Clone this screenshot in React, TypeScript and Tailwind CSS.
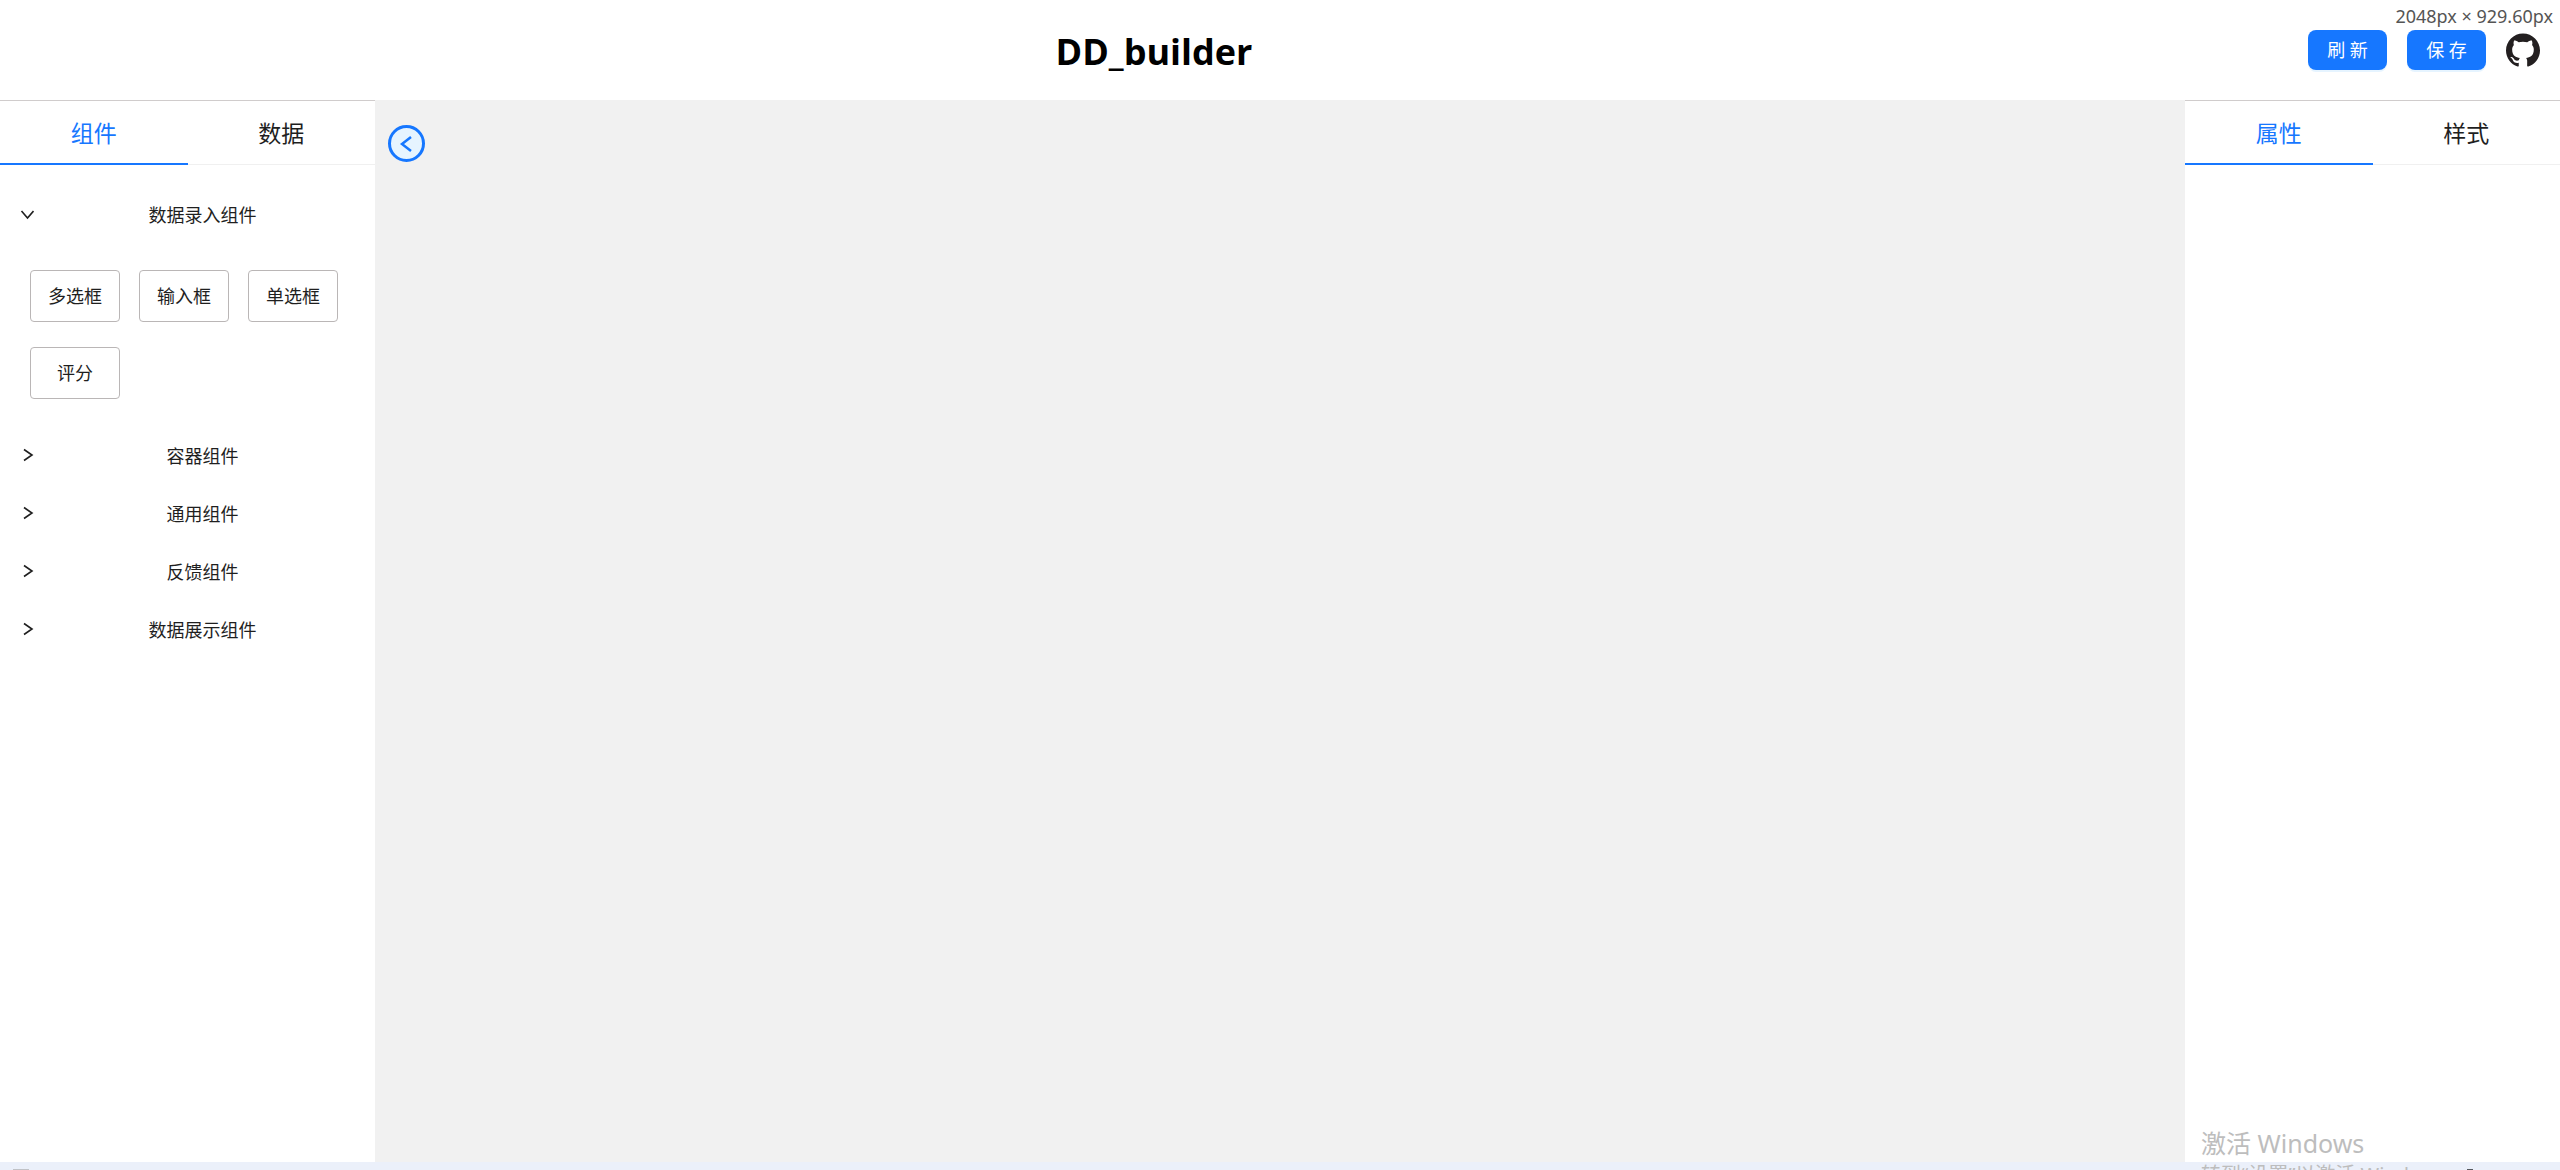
import { useState } from 'react';

const groups = ['容器组件', '通用组件', '反馈组件', '数据展示组件'];
const inputs = ['多选框', '输入框', '单选框', '评分'];

function Tabs({ items }: { items: string[] }) {
  const [active, setActive] = useState(0);
  return (
    <div role="tablist" className="flex h-[65px] border-t border-[#d0cccc]">
      {items.map((t, i) => (
        <button
          key={t}
          role="tab"
          aria-selected={i === active}
          onClick={() => setActive(i)}
          className={
            i === active
              ? 'flex-1 border-b-2 border-[#1677ff] pt-0.5 text-[23px] text-[#1677ff]'
              : 'flex-1 border-b border-[#f0f0f0] pt-0.5 text-[23px] text-[#1f1f1f]'
          }
        >
          {t}
        </button>
      ))}
    </div>
  );
}

function Chevron({ open }: { open: boolean }) {
  return (
    <svg viewBox="0 0 14 14" className="h-[14px] w-[14px] shrink-0" fill="none" stroke="#1f1f1f" strokeWidth="1.6">
      <path d={open ? 'M1.5 4 7.5 11 13.5 4' : 'M4 1.5 12 7 4 12.5'} />
    </svg>
  );
}

function GroupHeader({ label, open, onClick }: { label: string; open: boolean; onClick?: () => void }) {
  return (
    <button onClick={onClick} aria-expanded={open} className="flex h-[58px] w-full items-center px-5 text-[18px]">
      <Chevron open={open} />
      <span className="flex-1 pt-0.5 pl-4">{label}</span>
    </button>
  );
}

export default function App() {
  const [open, setOpen] = useState(true);
  return (
    <div className="relative flex h-screen flex-col overflow-hidden bg-white font-['Noto_Sans','Noto_Sans_CJK_SC',sans-serif] text-[#1f1f1f]">
      <header className="flex h-[100px] shrink-0 items-center">
        <h1 className="flex-1 pt-1 text-center font-['Open_Sans',sans-serif] text-[36px] font-bold text-black">DD_builder</h1>
        <div className="flex w-[252px] items-center gap-5">
          <button className="h-10 w-[79px] shrink-0 rounded-lg bg-[#1677ff] text-[18px] text-white shadow-[0_2px_0_#e6f4ff]">刷 新</button>
          <button className="h-10 w-[79px] shrink-0 rounded-lg bg-[#1677ff] text-[18px] text-white shadow-[0_2px_0_#e6f4ff]">保 存</button>
          <a href="#github" aria-label="GitHub">
            <svg viewBox="0 0 24 24" className="h-[34px] w-[34px]" fill="#231f20">
              <path d="M12 .297c-6.63 0-12 5.373-12 12 0 5.303 3.438 9.8 8.205 11.385.6.113.82-.258.82-.577 0-.285-.01-1.04-.015-2.04-3.338.724-4.042-1.61-4.042-1.61C4.422 18.07 3.633 17.7 3.633 17.7c-1.087-.744.084-.729.084-.729 1.205.084 1.838 1.236 1.838 1.236 1.07 1.835 2.809 1.305 3.495.998.108-.776.417-1.305.76-1.605-2.665-.3-5.466-1.332-5.466-5.93 0-1.31.465-2.38 1.235-3.22-.135-.303-.54-1.523.105-3.176 0 0 1.005-.322 3.3 1.23.96-.267 1.98-.399 3-.405 1.02.006 2.04.138 3 .405 2.28-1.552 3.285-1.23 3.285-1.23.645 1.653.24 2.873.12 3.176.765.84 1.23 1.91 1.23 3.22 0 4.61-2.805 5.625-5.475 5.92.42.36.81 1.096.81 2.22 0 1.606-.015 2.896-.015 3.286 0 .315.21.69.825.57C20.565 22.092 24 17.592 24 12.297c0-6.627-5.373-12-12-12" />
            </svg>
          </a>
        </div>
      </header>
      <div className="flex min-h-0 flex-1">
        <aside className="w-[375px] shrink-0">
          <Tabs items={['组件', '数据']} />
          <div className="pt-5">
            <GroupHeader label="数据录入组件" open={open} onClick={() => setOpen(!open)} />
            {open && (
              <div className="flex flex-wrap gap-x-[19px] gap-y-[25px] px-[30px] pt-[27px] pb-[27px]">
                {inputs.map((n) => (
                  <button key={n} className="h-[52px] w-[90px] rounded border border-[#bab6b6] text-[18px]">
                    {n}
                  </button>
                ))}
              </div>
            )}
            {groups.map((g) => (
              <GroupHeader key={g} label={g} open={false} />
            ))}
          </div>
        </aside>
        <main className="flex-1 bg-[#f1f1f1] px-[13px] py-[25px]">
          <button aria-label="收起" className="flex h-[37px] w-[37px] items-center justify-center rounded-full border-[3px] border-[#1677ff] bg-[#e6f4ff]">
            <svg viewBox="0 0 16 16" className="h-4 w-4" fill="none" stroke="#1677ff" strokeWidth="2.5">
              <path d="M12 1 3 8l9 7" />
            </svg>
          </button>
        </main>
        <aside className="w-[375px] shrink-0">
          <Tabs items={['属性', '样式']} />
        </aside>
      </div>
      <footer className="flex h-2 shrink-0 items-end justify-between bg-[#ebf0fa] pr-[87px] pl-[13px]">
        <span className="h-px w-4 bg-[#c0c2c6]" />
        <span className="h-px w-1.5 bg-[#55585e]" />
      </footer>
      <div className="absolute top-0 right-[7px] text-[18px] leading-8 text-[#555]">2048px × 929.60px</div>
      <div className="absolute right-[119px] bottom-[-19px] w-60 whitespace-nowrap text-[#bdbdbd]">
        <p className="text-[25px] leading-9">激活 Windows</p>
        <p className="text-[20px] leading-7">转到“设置”以激活 Windows</p>
      </div>
    </div>
  );
}
